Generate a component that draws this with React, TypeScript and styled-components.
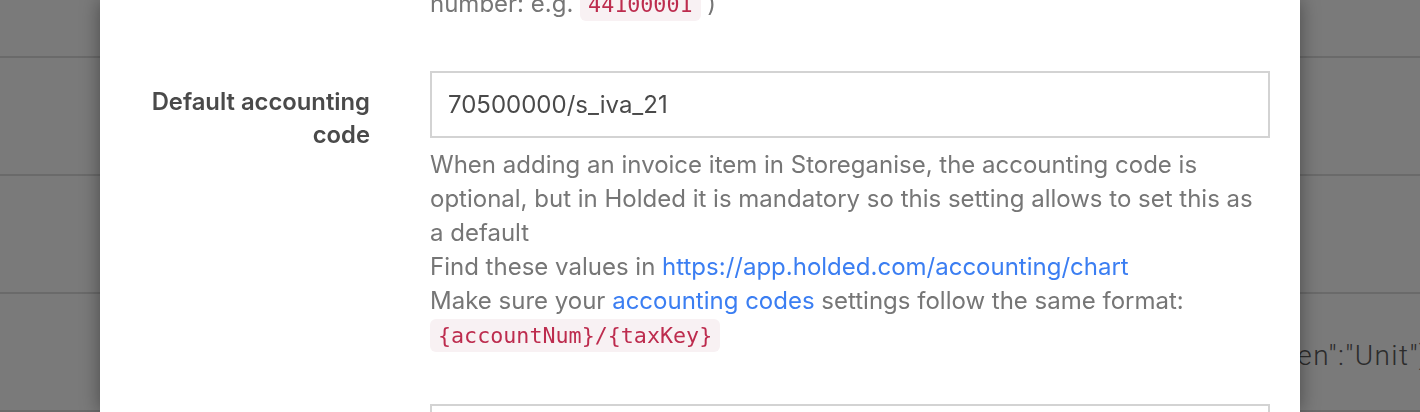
import React from 'react';
import styled, { createGlobalStyle } from 'styled-components';

const GlobalStyle = createGlobalStyle`
  html, body {
    margin: 0;
    padding: 0;
    width: 100%;
    height: 100%;
    overflow: hidden;
  }
  body {
    font-family: Inter, 'Liberation Sans', sans-serif;
    background: #7a7a7a;
  }
`;

// dimmed page behind the modal
const Page = styled.div`
  width: 100vw;
  height: 100vh;
  background: #7a7a7a;
  padding-top: 56px;
  box-sizing: border-box;
`;

const PageRow = styled.div`
  height: 118px;
  box-sizing: border-box;
  border-top: 2px solid #6a6a6a;
  display: grid;
  grid-template-columns: 1278px 1fr;
  align-items: center;
  overflow: hidden;
`;

const PageCell = styled.div`
  font-family: Roboto, 'Liberation Sans', sans-serif;
  font-weight: 300;
  font-size: 28px;
  letter-spacing: 1.4px;
  color: #2c2c2c;
  white-space: nowrap;
  padding-top: 6px;
`;

const Modal = styled.div`
  position: fixed;
  top: 0;
  bottom: 0;
  left: 100px;
  width: 1200px;
  background: #fff;
  box-shadow: 0 0 18px rgba(0, 0, 0, 0.4);
  overflow: hidden;
`;

const Body = styled.div`
  margin-top: -13px;
  display: flex;
  flex-direction: column;
  gap: 49px;
  padding-right: 30px;
`;

const FieldRow = styled.div<{ $last?: boolean }>`
  display: grid;
  grid-template-columns: 270px 840px;
  column-gap: 60px;
  align-items: start;
  margin-top: ${(p) => (p.$last ? '2px' : '0')};
`;

const Label = styled.label`
  text-align: right;
  font-size: 23.8px;
  line-height: 33px;
  font-weight: 600;
  color: #4a4a4a;
  padding-top: 14px;
`;

const Field = styled.div`
  display: flex;
  flex-direction: column;
  gap: 10px;
`;

const Input = styled.input`
  box-sizing: border-box;
  width: 100%;
  height: 67px;
  border: 2px solid #d3d3d3;
  border-radius: 0;
  padding: 0 16px;
  font-family: Inter, 'Liberation Sans', sans-serif;
  font-size: 24px;
  color: #4a4a4a;
  outline: none;
  background: #fff;
`;

const Help = styled.div`
  font-size: 24px;
  line-height: 34px;
  color: #767676;
`;

const Link = styled.a`
  color: #3b7ef2;
  text-decoration: none;
`;

const Code = styled.code`
  font-family: 'DejaVu Sans Mono', 'Liberation Mono', monospace;
  font-size: 21.7px;
  color: #bd2c4e;
  background: #f8f1f3;
  border-radius: 6px;
  padding: 4px 8px;
`;

export default function App() {
  return (
    <>
      <GlobalStyle />
      <Page>
        <PageRow />
        <PageRow />
        <PageRow>
          <div />
          <PageCell>{'{"en":"Unit"}'}</PageCell>
        </PageRow>
        <PageRow />
      </Page>
      <Modal>
        <Body>
          <FieldRow>
            <div />
            <Help>
              number: e.g. <Code>44100001</Code> )
            </Help>
          </FieldRow>
          <FieldRow>
            <Label>Default accounting code</Label>
            <Field>
              <Input defaultValue="70500000/s_iva_21" />
              <Help>
                When adding an invoice item in Storeganise, the accounting code is optional, but in
                Holded it is mandatory so this setting allows to set this as a default
                <br />
                Find these values in{' '}
                <Link href="#">https://app.holded.com/accounting/chart</Link>
                <br />
                Make sure your <Link href="#">accounting codes</Link> settings follow the same
                format: <Code>{'{accountNum}/{taxKey}'}</Code>
              </Help>
            </Field>
          </FieldRow>
          <FieldRow $last>
            <Label>Default tax</Label>
            <Field>
              <Input defaultValue="" />
            </Field>
          </FieldRow>
        </Body>
      </Modal>
    </>
  );
}
